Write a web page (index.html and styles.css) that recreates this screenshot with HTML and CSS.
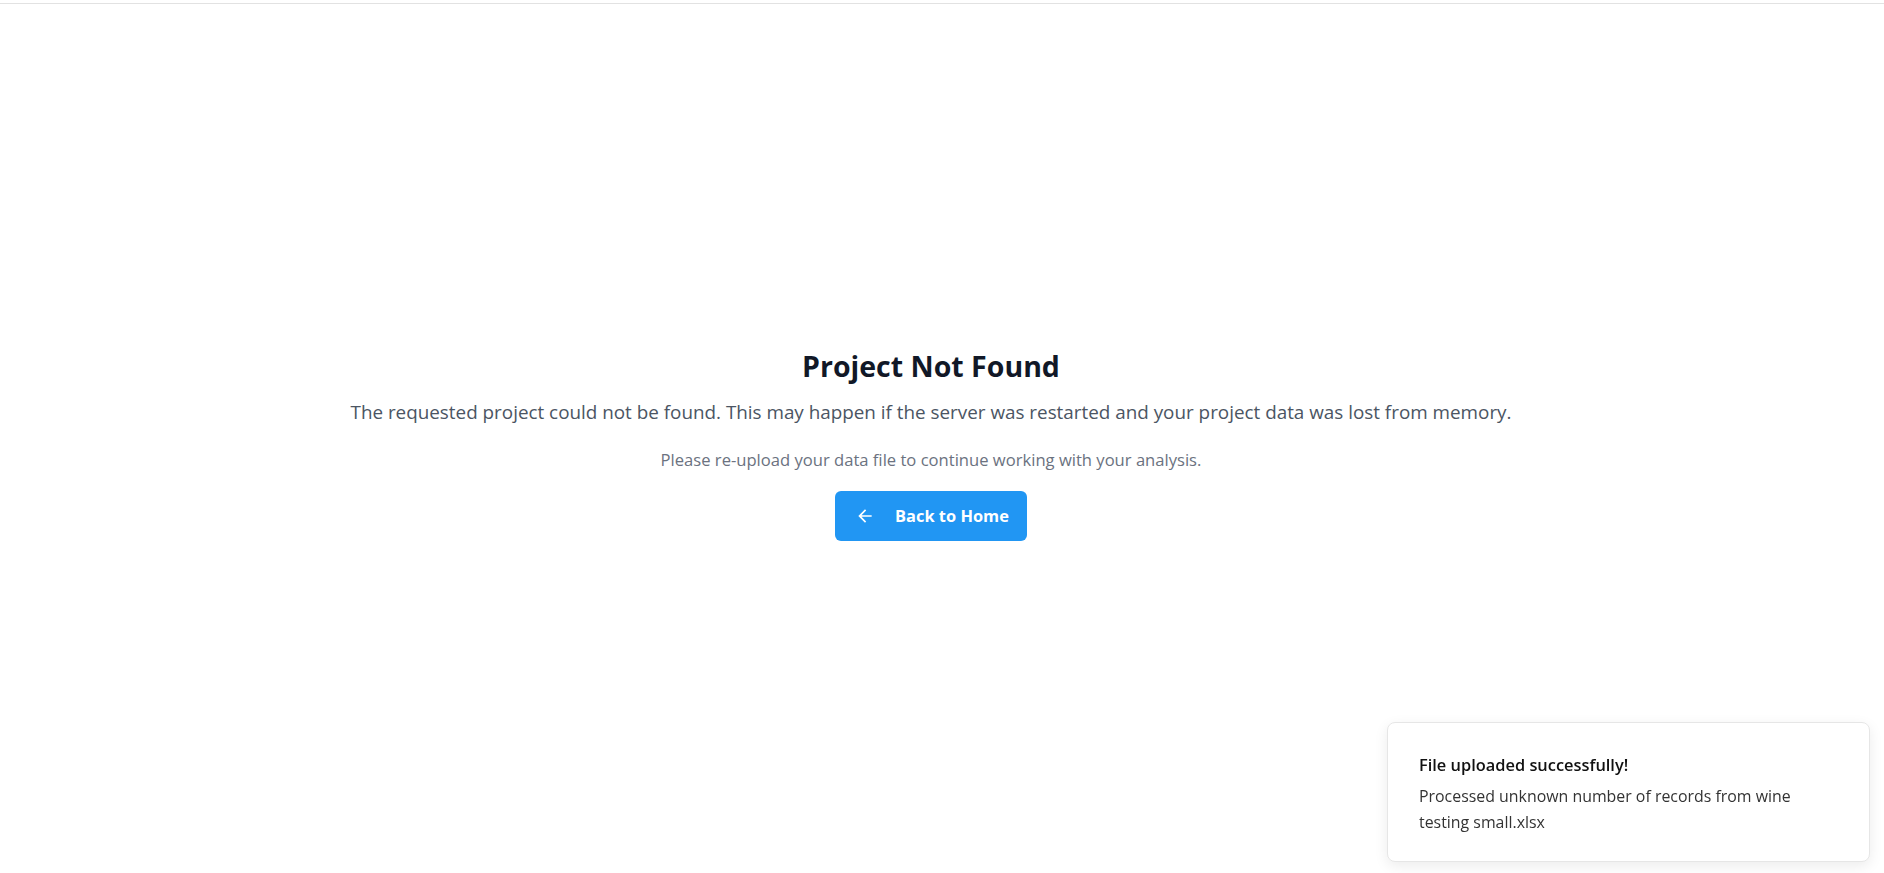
FILE: index.html
```html
<!DOCTYPE html>
<html lang="en">
<head>
<meta charset="utf-8">
<title>Project Not Found</title>
<link rel="stylesheet" href="styles.css">
</head>
<body>
<div class="topbar"></div>
<main class="page">
  <section class="notfound">
    <h1 class="title">Project Not Found</h1>
    <p class="lead">The requested project could not be found. This may happen if the server was restarted and your project data was lost from memory.</p>
    <p class="hint">Please re-upload your data file to continue working with your analysis.</p>
    <button class="home-btn" type="button">
      <svg class="arrow" width="20" height="20" viewBox="0 0 24 24" aria-hidden="true"><path d="M20 11H7.83l5.59-5.59L12 4l-8 8 8 8 1.41-1.41L7.83 13H20v-2z" fill="currentColor"/></svg>
      <span>Back to Home</span>
    </button>
  </section>
</main>
<div class="toast">
  <div class="toast-title">File uploaded successfully!</div>
  <div class="toast-body">Processed unknown number of records from wine testing small.xlsx</div>
</div>
</body>
</html>
```
FILE: styles.css
```css
html, body {
  margin: 0;
  padding: 0;
  background: #ffffff;
  font-family: "Open Sans", "Noto Sans", sans-serif;
}
.topbar {
  height: 3px;
  border-bottom: 1px solid #e2e2e2;
}
.page {
  display: flex;
  justify-content: center;
  padding: 344px 22px 0 0;
}
.notfound {
  display: flex;
  flex-direction: column;
  align-items: center;
  text-align: center;
}
.title {
  margin: 0;
  font-size: 28.5px;
  line-height: 36px;
  font-weight: 700;
  color: #111827;
}
.lead {
  margin: 13.5px 0 0;
  font-size: 18.85px;
  line-height: 28px;
  color: #4b5563;
}
.hint {
  margin: 22px 0 0;
  font-size: 16.6px;
  line-height: 24px;
  color: #6b7280;
}
.home-btn {
  margin-top: 19px;
  width: 192px;
  height: 50px;
  border: none;
  border-radius: 6px;
  background: #2196f3;
  color: #ffffff;
  font-family: inherit;
  font-size: 16.4px;
  font-weight: 700;
  display: flex;
  align-items: center;
  justify-content: center;
  gap: 20px;
  padding: 0 0 0 2px;
}
.arrow {
  display: block;
}
.toast {
  position: fixed;
  right: 14px;
  bottom: 11px;
  width: 483px;
  height: 140px;
  box-sizing: border-box;
  padding: 31px 30px 0 31px;
  background: #ffffff;
  border: 1px solid #e6e6e6;
  border-radius: 8px;
  box-shadow: 0 4px 14px rgba(0, 0, 0, 0.08);
}
.toast-title {
  font-size: 16.4px;
  font-weight: 600;
  line-height: 22px;
  color: #111111;
}
.toast-body {
  margin-top: 6.5px;
  font-size: 15.9px;
  line-height: 26px;
  color: #333333;
}
```
